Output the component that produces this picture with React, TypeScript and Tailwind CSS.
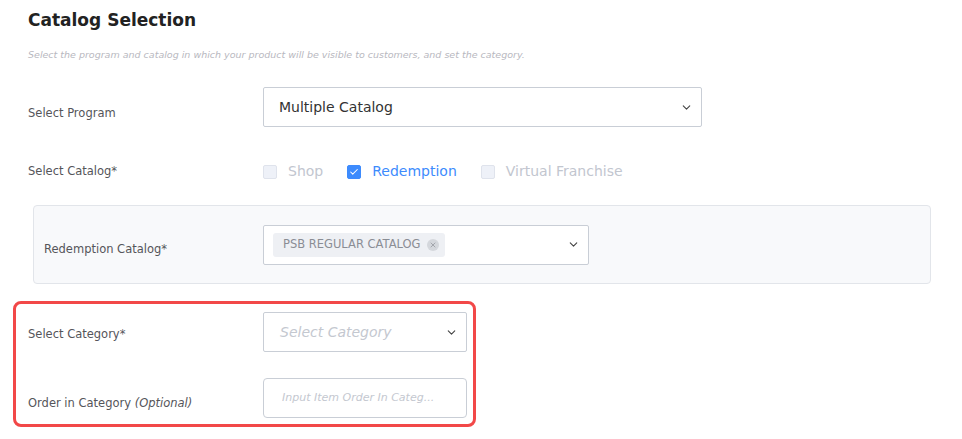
import React from 'react';
import { ChevronDown, Check, X } from 'lucide-react';

const font = "font-['DejaVu_Sans',sans-serif]";

const Label: React.FC<{ children: React.ReactNode; className?: string }> = ({ children, className = '' }) => (
  <span className={`text-[11.5px] font-medium text-[#55555a] ${className}`}>{children}</span>
);

const CheckOption: React.FC<{ label: string; checked?: boolean }> = ({ label, checked }) => (
  <label className="flex items-center gap-[11px]">
    <span
      className={`flex h-[14px] w-[14px] items-center justify-center rounded-[2px] border ${
        checked ? 'border-[#3d8bfd] bg-[#3d8bfd]' : 'border-[#dfe3ec] bg-[#eef1f8]'
      }`}
    >
      {checked && <Check className="h-[10px] w-[10px] text-white" strokeWidth={2.5} />}
    </span>
    <span className={`text-[14px] ${checked ? 'text-[#3d8bfd]' : 'text-[#c2c6cf]'}`}>{label}</span>
  </label>
);

const App: React.FC = () => {
  return (
    <div className={`min-h-[439px] w-[962px] bg-white ${font}`}>
      <div className="px-[28px] pt-[8px]">
        <h1 className="text-[17px] font-semibold leading-[24px] text-[#222]">Catalog Selection</h1>
        <p className="mt-[16px] text-[9.5px] italic text-[#b8b8c0]">
          Select the program and catalog in which your product will be visible to customers, and set the category.
        </p>
      </div>

      {/* program */}
      <div className="mt-[25px] flex items-center px-[28px]">
        <Label className="w-[235px] pt-[13px]">Select Program</Label>
        <div className="flex h-[40px] w-[439px] items-center justify-between rounded-[2px] border border-[#c9ced6] pl-[15px] pr-[8px]">
          <span className="text-[14px] text-[#333]">Multiple Catalog</span>
          <ChevronDown className="h-[13px] w-[13px] text-[#444]" strokeWidth={2} />
        </div>
      </div>

      {/* catalog checkboxes */}
      <div className="mt-[34px] flex items-center px-[28px]">
        <Label className="w-[235px]">Select Catalog*</Label>
        <div className="flex items-center gap-[24px]">
          <CheckOption label="Shop" />
          <CheckOption label="Redemption" checked />
          <CheckOption label="Virtual Franchise" />
        </div>
      </div>

      {/* redemption catalog panel */}
      <div className="ml-[33px] mt-[23px] flex h-[79px] w-[898px] items-center rounded-[4px] border border-[#e2e5ea] bg-[#f8f9fb] px-[10px]">
        <Label className="w-[219px] pt-[10px]">Redemption Catalog*</Label>
        <div className="flex h-[40px] w-[326px] items-center justify-between rounded-[2px] border border-[#c9ced6] bg-white pl-[9px] pr-[8px]">
          <span className="flex h-[24px] items-center gap-[6px] rounded-[3px] bg-[#eef0f4] pl-[10px] pr-[6px]">
            <span className="text-[11.5px] text-[#8a8d94]">PSB REGULAR CATALOG</span>
            <span className="flex h-[12px] w-[12px] items-center justify-center rounded-full bg-[#d4d7dc]">
              <X className="h-[8px] w-[8px] text-[#8a8d94]" strokeWidth={2} />
            </span>
          </span>
          <ChevronDown className="h-[13px] w-[13px] text-[#444]" strokeWidth={2} />
        </div>
      </div>

      {/* category rows */}
      <div className="relative mt-[17px]">
        <div className="pointer-events-none absolute left-[13px] top-0 h-[126px] w-[463px] rounded-[8px] border-[3px] border-[#f24848]" />
        <div className="flex items-center px-[28px] pt-[11px]">
          <Label className="w-[235px] pt-[4px]">Select Category*</Label>
          <div className="flex h-[40px] w-[204px] items-center justify-between rounded-[2px] border border-[#c9ced6] pl-[16px] pr-[8px]">
            <span className="text-[14px] italic text-[#c4c8d0]">Select Category</span>
            <ChevronDown className="h-[13px] w-[13px] text-[#444]" strokeWidth={2} />
          </div>
        </div>
        <div className="mt-[26px] flex items-center px-[28px]">
          <Label className="w-[235px] pt-[10px]">
            Order in Category <span className="italic">(Optional)</span>
          </Label>
          <div className="flex h-[40px] w-[204px] items-center rounded-[4px] border border-[#c9ced6] pl-[18px] pr-[8px]">
            <span className="truncate text-[11px] italic text-[#c4c8d0]">Input Item Order In Categ...</span>
          </div>
        </div>
      </div>
    </div>
  );
};

export default App;
